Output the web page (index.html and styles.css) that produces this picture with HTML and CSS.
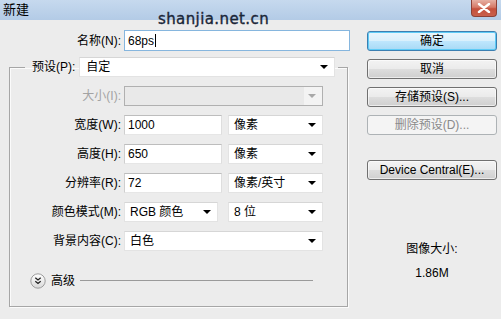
FILE: index.html
```html
<!DOCTYPE html>
<html lang="zh-CN">
<head>
<meta charset="utf-8">
<title>新建</title>
<link rel="stylesheet" href="styles.css">
</head>
<body>
<div class="dialog">
  <div class="titlebar">
    <span class="title">新建</span>
    <span class="close"><svg width="14" height="10" viewBox="0 0 14 10"><path d="M2 1 L12 9 M12 1 L2 9" stroke="#fff" stroke-width="2.4" stroke-linecap="round"/></svg></span>
  </div>
  <div class="watermark">shanjia.net.cn</div>
  <div class="body">
    <div class="left">
      <div class="row name-row">
        <span class="lbl">名称(N):</span>
        <div class="input focus w-name">68ps<span class="caret"></span></div>
      </div>
      <fieldset class="group">
        <legend class="legend">
          <div class="legend-inner">
            <span class="lbl-legend">预设(P):</span>
            <div class="select w-preset">自定<i class="arrow"></i></div>
          </div>
        </legend>
        <div class="rows">
          <div class="row">
            <span class="lbl fl disabled">大小(I):</span>
            <div class="select disabled-select w-full"><span class="dd-zone"><i class="arrow gray"></i></span></div>
          </div>
          <div class="row">
            <span class="lbl fl">宽度(W):</span>
            <div class="input w-num">1000</div>
            <div class="select w-unit">像素<i class="arrow"></i></div>
          </div>
          <div class="row">
            <span class="lbl fl">高度(H):</span>
            <div class="input w-num">650</div>
            <div class="select w-unit">像素<i class="arrow"></i></div>
          </div>
          <div class="row">
            <span class="lbl fl">分辨率(R):</span>
            <div class="input w-num">72</div>
            <div class="select w-unit">像素/英寸<i class="arrow"></i></div>
          </div>
          <div class="row">
            <span class="lbl fl">颜色模式(M):</span>
            <div class="select w-mode">RGB 颜色<i class="arrow"></i></div>
            <div class="select w-unit">8 位<i class="arrow"></i></div>
          </div>
          <div class="row">
            <span class="lbl fl">背景内容(C):</span>
            <div class="select w-full">白色<i class="arrow"></i></div>
          </div>
        </div>
        <div class="advanced">
          <svg class="adv-icon" width="16" height="16" viewBox="0 0 16 16">
            <defs><linearGradient id="g" x1="0" y1="0" x2="0" y2="1"><stop offset="0" stop-color="#ffffff"/><stop offset="1" stop-color="#d9d9d9"/></linearGradient></defs>
            <circle cx="8" cy="8" r="7.2" fill="url(#g)" stroke="#9c9c9c" stroke-width="1"/>
            <path d="M5.3 4.8 L8 7 L10.7 4.8 M5.3 8.2 L8 10.4 L10.7 8.2" fill="none" stroke="#222" stroke-width="1.3"/>
          </svg>
          <span class="adv-label">高级</span>
          <span class="adv-line"></span>
        </div>
      </fieldset>
    </div>
    <div class="right">
      <div class="btn default">确定</div>
      <div class="btn">取消</div>
      <div class="btn">存储预设(S)...</div>
      <div class="btn off">删除预设(D)...</div>
      <div class="btn device">Device Central(E)...</div>
      <div class="info">
        <div class="info-label">图像大小:</div>
        <div class="info-value">1.86M</div>
      </div>
    </div>
  </div>
</div>
</body>
</html>
```
FILE: styles.css
```css
* { box-sizing: border-box; }
html, body { margin: 0; padding: 0; }
body {
  width: 501px;
  height: 319px;
  overflow: hidden;
  background: #ececec;
  font: 12px/14px "Liberation Sans", "Noto Sans CJK SC", sans-serif;
  color: #000;
}
.dialog { position: relative; height: 319px; }

.titlebar {
  height: 20px;
  background: linear-gradient(#c6d9ee, #b3cbe6);
  display: flex;
  justify-content: space-between;
  align-items: flex-start;
  padding-left: 3px;
}
.title { font-size: 13px; line-height: 19px; }
.close {
  width: 26px;
  height: 17px;
  margin-right: 4px;
  background: linear-gradient(#e6b0a4, #d67a68 45%, #c4503c 55%, #c9604c);
  border: 1px solid #8d4136;
  border-top: none;
  border-radius: 0 0 4px 4px;
  display: flex;
  align-items: center;
  justify-content: center;
}

.watermark {
  position: absolute;
  left: 158px;
  top: 10px;
  font: 15px/18px "DejaVu Sans", sans-serif;
  letter-spacing: 0.4px;
  color: #1a2638;
  -webkit-text-stroke: 0.35px #1a2638;
}

.body { display: flex; }
.left { width: 355px; }
.right {
  width: 130px;
  margin-left: 12px;
  padding-top: 11px;
  display: flex;
  flex-direction: column;
  gap: 8px;
}

.row { display: flex; align-items: center; height: 20px; }
.name-row { margin-top: 10px; height: 21px; }
.lbl { width: 121px; text-align: right; margin-right: 3px; white-space: nowrap; }
.lbl.fl { width: 111px; }
.disabled { color: #a3a3a3; }

.input {
  height: 20px;
  background: #fff;
  border: 1px solid;
  border-color: #bdbdbd #dedede #e6e6e6 #cfcfcf;
  padding-left: 3px;
  display: flex;
  align-items: center;
}
.input.focus { border-color: #86b6de; height: 21px; }
.caret { display: inline-block; width: 1px; height: 13px; background: #000; margin-left: 1px; }
.w-name { width: 226px; }
.w-num { width: 98px; margin-right: 6px; }

.select {
  position: relative;
  height: 20px;
  background: #fff;
  border: 1px solid #e3e3e3;
  border-top-color: #d6d6d6;
  padding-left: 5px;
  display: flex;
  align-items: center;
  white-space: nowrap;
}
.w-preset { width: 256px; padding-left: 6px; }
.w-full { width: 199px; }
.w-unit { width: 95px; }
.w-mode { width: 94px; margin-right: 10px; }
.arrow {
  position: absolute;
  right: 6px;
  top: 7px;
  width: 0;
  height: 0;
  border-left: 4px solid transparent;
  border-right: 4px solid transparent;
  border-top: 4px solid #000;
}
.arrow.gray { border-top-color: #a8a8a8; }
.disabled-select {
  background: #e9e9e9;
  border-color: #b0b0b0;
  padding: 0;
  justify-content: flex-end;
}
.dd-zone { position: relative; width: 18px; height: 18px; background: #f3f3f3; }

.group {
  margin: 6px 0 0 9px;
  width: 339px;
  padding: 0 0 17px 0;
  border: 1px solid #a6a6a6;
  box-shadow: inset 1px 1px 0 #fbfbfb, 1px 1px 0 #fbfbfb;
  min-width: 0;
}
.legend { margin-left: 15px; padding: 0 3px 0 7px; }
.legend-inner { display: flex; align-items: center; height: 20px; }
.lbl-legend { margin-right: 4px; white-space: nowrap; }

.rows { margin-top: 9px; display: flex; flex-direction: column; gap: 9px; }

.advanced {
  margin-top: 22px;
  height: 16px;
  display: flex;
  align-items: center;
  padding-left: 20px;
}
.adv-icon { display: block; }
.adv-label { margin-left: 5px; font-size: 12px; }
.adv-line { margin-left: 5px; width: 233px; height: 1px; background: #9a9a9a; margin-top: -2px; }

.btn {
  height: 20px;
  border: 1px solid #707070;
  border-radius: 3px;
  background: linear-gradient(#f3f3f3, #ebebeb 48%, #dddddd 52%, #cfcfcf);
  box-shadow: inset 0 0 0 1px rgba(255,255,255,0.6);
  display: flex;
  align-items: center;
  justify-content: center;
  white-space: nowrap;
}
.btn.default {
  border-color: #3c7fb1;
  background: linear-gradient(#eaf6fd, #d9f0fc 48%, #bee6fd 52%, #a7d9f5);
  box-shadow: inset 0 0 0 1px #5ecbf6;
}
.btn.off {
  border-color: #adb2b5;
  background: #f4f4f4;
  color: #8a8a8a;
  box-shadow: none;
}
.btn.device { margin-top: 17px; }

.info { margin-top: 54px; text-align: center; display: flex; flex-direction: column; gap: 10px; }
```
